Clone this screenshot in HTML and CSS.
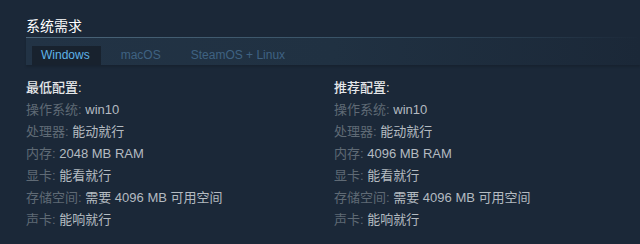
FILE: index.html
```html
<!DOCTYPE html>
<html lang="zh-CN">
<head>
    <meta charset="UTF-8">
    <title>系统需求</title>
    <link rel="stylesheet" href="styles.css">
</head>
<body>
    <div class="sysreq">
        <h2 class="sysreq-title">系统需求</h2>
        <div class="sysreq-tabs">
            <span class="tab active">Windows</span>
            <span class="tab">macOS</span>
            <span class="tab">SteamOS + Linux</span>
        </div>
        <div class="sysreq-cols">
            <ul class="col">
                <li class="col-head">最低配置:</li>
                <li><span class="lbl">操作系统:</span> win10</li>
                <li><span class="lbl">处理器:</span> 能动就行</li>
                <li><span class="lbl">内存:</span> 2048 MB RAM</li>
                <li><span class="lbl">显卡:</span> 能看就行</li>
                <li><span class="lbl">存储空间:</span> 需要 4096 MB 可用空间</li>
                <li><span class="lbl">声卡:</span> 能响就行</li>
            </ul>
            <ul class="col">
                <li class="col-head">推荐配置:</li>
                <li><span class="lbl">操作系统:</span> win10</li>
                <li><span class="lbl">处理器:</span> 能动就行</li>
                <li><span class="lbl">内存:</span> 4096 MB RAM</li>
                <li><span class="lbl">显卡:</span> 能看就行</li>
                <li><span class="lbl">存储空间:</span> 需要 4096 MB 可用空间</li>
                <li><span class="lbl">声卡:</span> 能响就行</li>
            </ul>
        </div>
    </div>
</body>
</html>
```
FILE: styles.css
```css
body {
    margin: 0;
    background: #1b2838;
    font-family: "Liberation Sans", "Noto Sans CJK SC", sans-serif;
    color: #b4bbc1;
}
.sysreq {
    padding: 16px 0 0 26px;
}
.sysreq-title {
    margin: 0;
    font-size: 14px;
    font-weight: normal;
    line-height: 20px;
    color: #ffffff;
}
.sysreq-tabs {
    display: flex;
    align-items: flex-end;
    height: 27px;
    margin-top: 1px;
    padding-left: 6px;
    border-top: 1px solid transparent;
    border-image: linear-gradient(to right, #4b6579 0%, #3a5468 50%, rgba(27, 40, 56, 0) 100%) 1;
    background: linear-gradient(to right, #223345 0%, #203142 50%, #1b2838 100%);
    box-shadow: 0 2px 2px rgba(0, 0, 0, 0.15);
}
.tab {
    padding: 0 10px;
    height: 19px;
    line-height: 19px;
    font-size: 12px;
    color: #3f6282;
    margin-right: 10px;
}
.tab.active {
    background: #18222e;
    color: #5eb3e8;
    padding: 0 11px 0 9px;
}
.sysreq-cols {
    display: grid;
    grid-template-columns: 308px 1fr;
    margin-top: 12px;
}
.col {
    list-style: none;
    margin: 0;
    padding: 0;
    font-size: 13px;
    line-height: 22px;
}
.col li {
    white-space: nowrap;
}
.col-head {
    color: #e4e6e8;
    font-weight: 500;
}
.lbl {
    color: #5f6a75;
}
```
